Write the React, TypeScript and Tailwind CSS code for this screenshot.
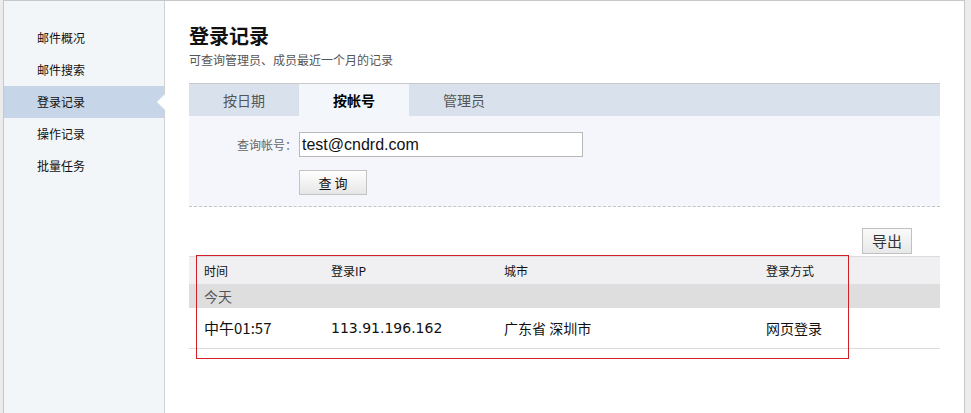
import React from 'react';

const cjk = { fontFamily: '"Noto Sans CJK SC", "Liberation Sans", sans-serif' };
const latin = { fontFamily: '"Liberation Sans", "Noto Sans CJK SC", sans-serif' };

const navItems = ['邮件概况', '邮件搜索', '登录记录', '操作记录', '批量任务'];
const tabs = ['按日期', '按帐号', '管理员'];

const Sidebar: React.FC = () => (
  <div className="w-[161px] shrink-0 bg-[#f3f6f8] border-r border-[#d0d0d0] pt-[21px]">
    {navItems.map((item) => {
      const active = item === '登录记录';
      return (
        <div
          key={item}
          className={`relative h-[32px] flex items-center pl-[33px] text-[12px] text-[#111] ${
            active ? 'bg-[#c6d6e8]' : ''
          }`}
        >
          {item}
          {active && (
            <span className="absolute right-[-1px] top-[8px] w-0 h-0 border-y-[8px] border-y-transparent border-r-[8px] border-r-white" />
          )}
        </div>
      );
    })}
  </div>
);

export default function App() {
  return (
    <div className="w-[971px] h-[413px] bg-[#ececec] pl-[3px] pr-[6px] overflow-hidden" style={cjk}>
      <div className="h-full flex bg-white border-t border-x border-[#c8c8c8]">
        <Sidebar />

        {/* Main */}
        <div className="flex-1 pl-[24px] pr-[24px] pt-[23px]">
          <h1 className="text-[20px] leading-[24px] font-bold text-[#111]">登录记录</h1>
          <p className="mt-[4px] text-[12px] leading-[16px] text-[#555]">可查询管理员、成员最近一个月的记录</p>

          {/* Tabs */}
          <div className="mt-[15px] flex h-[33px] bg-[#d9e2ec] border-t border-[#c9c9c9]">
            {tabs.map((t) => {
              const active = t === '按帐号';
              return (
                <div
                  key={t}
                  className={`w-[110px] flex items-center justify-center text-[14px] ${
                    active ? 'bg-[#f3f6fb] font-bold text-[#000]' : 'text-[#555]'
                  }`}
                >
                  {t}
                </div>
              );
            })}
          </div>

          {/* Search form */}
          <div className="bg-[#f4f6fb] border-b border-dashed border-[#c4c4c4] pt-[16px] pb-[11px]">
            <div className="flex items-center">
              <span className="w-[110px] text-right pr-[2px] text-[12px] text-[#666]">查询帐号：</span>
              <div className="w-[284px] h-[25px] border border-[#b8b8b8] bg-white flex items-center px-[2px] text-[16px] text-[#111]" style={latin}>
                test@cndrd.com
              </div>
            </div>
            <div className="mt-[12px] ml-[110px]">
              <button className="w-[68px] h-[25px] border border-[#c4c4c4] bg-gradient-to-b from-white to-[#e6e6e6] text-[13px] text-[#111]">
                查 询
              </button>
            </div>
          </div>

          {/* Export */}
          <div className="flex justify-end pr-[28px] mt-[21px]">
            <button className="w-[50px] h-[26px] border border-[#c0c0c0] bg-gradient-to-b from-[#fafafa] to-[#e8e8e8] text-[15px] text-[#333]">
              导出
            </button>
          </div>

          {/* Table */}
          <div className="relative mt-[2px]">
            <div className="flex h-[28px] items-center bg-[#f0f0f2] border-t border-[#dcdcdc] text-[12px] text-[#111]">
              <span className="w-[142px] pl-[15px]">时间</span>
              <span className="w-[173px]">登录IP</span>
              <span className="w-[262px]">城市</span>
              <span>登录方式</span>
            </div>
            <div className="h-[24px] flex items-center bg-[#dedede] pl-[15px] text-[14px] text-[#555]">今天</div>
            <div className="flex h-[41px] items-center border-b border-[#dcdcdc] text-[14px] text-[#111]">
              <span className="w-[142px] pl-[15px] text-[15px]">中午01:57</span>
              <span className="w-[173px]" style={{ fontFamily: '"DejaVu Sans", sans-serif', fontSize: '14px' }}>113.91.196.162</span>
              <span className="w-[262px]">广东省 深圳市</span>
              <span>网页登录</span>
            </div>

            {/* annotation box */}
            <div className="absolute left-[7px] top-[-1px] w-[653px] h-[104px] border border-[#d01f27] pointer-events-none" />
          </div>
        </div>
      </div>
    </div>
  );
}
